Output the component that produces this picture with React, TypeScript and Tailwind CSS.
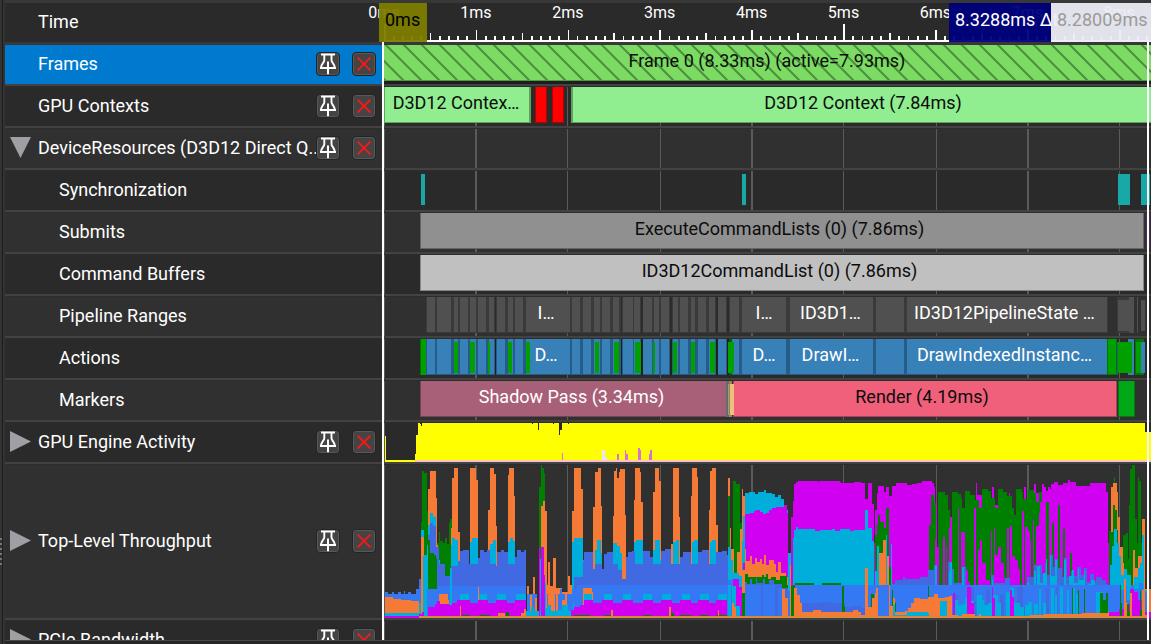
import type { ReactNode } from "react";

/* Horizontal extent of the visible track, in track units. */
const TRACK_START = 384;
const TRACK_WIDTH = 767;

const GRID = [
  { x: 384, w: 1 },
  { x: 475, w: 2 },
  { x: 567, w: 1 },
  { x: 660, w: 1 },
  { x: 751, w: 2 },
  { x: 843, w: 1 },
  { x: 936, w: 1 },
  { x: 1027, w: 2 },
  { x: 1119, w: 1 },
];

const percent = (x: number) => `${((x - TRACK_START) / TRACK_WIDTH) * 100}%`;
const span = (w: number) => `${(w / TRACK_WIDTH) * 100}%`;

/* Turns "x:y x:y ..." into a stepped area that is closed at the floor. */
function stepPath(steps: string, floor: number) {
  const points = steps
    .trim()
    .split(/\s+/)
    .map((p) => p.split(":").map(Number));
  let d = `M${points[0][0]} ${floor}`;
  points.forEach(([x, y], i) => {
    d += `V${y}`;
    if (i < points.length - 1) d += `H${points[i + 1][0]}`;
    else d += `H${x}`;
  });
  return `${d}V${floor}Z`;
}

function Track({ height, children }: { height: number; children?: ReactNode }) {
  return (
    <svg
      className="block w-full"
      height={height}
      viewBox={`${TRACK_START} 0 ${TRACK_WIDTH} ${height}`}
      preserveAspectRatio="none"
      shapeRendering="crispEdges"
      aria-hidden="true"
    >
      {GRID.map((g) => (
        <rect key={g.x} x={g.x} y={0} width={g.w} height={height} fill="#5a5a5a" />
      ))}
      {children}
    </svg>
  );
}

function BarLabel({ from, to, light, children }: { from: number; to: number; light?: boolean; children: string }) {
  return (
    <span
      className={`absolute top-0 flex h-8 items-center justify-center overflow-hidden whitespace-nowrap ${light ? "text-white" : "text-[#0c0c0c]"}`}
      style={{ left: percent(from), width: span(to - from) }}
    >
      {children}
    </span>
  );
}

function Bar({ from, to, fill, edge }: { from: number; to: number; fill: string; edge: string }) {
  return (
    <>
      <rect x={from} y={0} width={to - from} height={36} fill={edge} />
      <rect x={from + 1} y={0} width={to - from - 2} height={35} fill={fill} />
    </>
  );
}

function PinIcon() {
  return (
    <svg className="size-6" viewBox="0 0 24 24" fill="none" stroke="#fff" aria-hidden="true">
      <path d="M5 2.5H19M8.3 3V8.2C8.3 10.5 5.2 11.5 4.9 16M15.5 3V8.2C15.5 10.5 18.6 11.5 18.9 16" strokeWidth="1.9" />
      <path d="M4 16H20M12 9.5V22.3" strokeWidth="2" />
    </svg>
  );
}

function CrossIcon() {
  return (
    <svg className="size-6" viewBox="0 0 24 24" fill="none" stroke="#e81c1c" strokeWidth="2" aria-hidden="true">
      <path d="M5.5 5.5L18.5 18.5M18.5 5.5L5.5 18.5" />
    </svg>
  );
}

function RowButton({ label, children }: { label: string; children: ReactNode }) {
  return (
    <button
      type="button"
      aria-label={label}
      className="relative size-6 rounded border border-[#242424] bg-[#444444] shadow-[inset_0_0_0_1px_#585858]"
    >
      <span className="absolute -inset-px">{children}</span>
    </button>
  );
}

function Expander({ open, name }: { open: boolean; name: string }) {
  return (
    <button type="button" aria-label={`Toggle ${name}`} aria-expanded={open} className="ml-[5px] size-[21px]">
      <svg className="size-[21px]" viewBox="0 0 21 21" fill="#a0a0a4" aria-hidden="true">
        <path d={open ? "M0 0H21L10.5 21Z" : "M0 0L21 10.5L0 21Z"} />
      </svg>
    </button>
  );
}

type RowProps = {
  name: string;
  shade?: "dark" | "light";
  selected?: boolean;
  child?: boolean;
  tools?: boolean;
  expander?: "open" | "closed";
  children?: ReactNode;
};

function Row({ name, shade = "dark", selected, child, tools, expander, children }: RowProps) {
  const bg = shade === "dark" ? "bg-[#2a2a2a]" : "bg-[#303030]";
  return (
    <section className={`mb-px flex shrink-0 border-b-2 border-[#424242] ${bg}`}>
      <div className={`flex w-[377px] shrink-0 items-center pb-0.5 ${selected ? "bg-[#007acf]" : ""}`}>
        <div className="flex w-[33px] shrink-0 items-center">
          {expander && <Expander open={expander === "open"} name={name} />}
        </div>
        <span className={`min-w-0 flex-1 overflow-hidden whitespace-nowrap text-white ${child ? "pl-[21px]" : ""}`}>
          {name}
        </span>
        {tools && (
          <div className="flex gap-3 pr-1.5">
            <RowButton label={`Pin ${name}`}>
              <PinIcon />
            </RowButton>
            <RowButton label={`Remove ${name}`}>
              <CrossIcon />
            </RowButton>
          </div>
        )}
      </div>
      <div className="relative ml-0.5 min-w-0 flex-1">{children}</div>
    </section>
  );
}

const TICKS = Array.from({ length: 84 }, (_, i) => {
  const x = 384.2 + i * 9.19;
  const left = Math.floor(x);
  const height = i % 50 === 0 ? 16 : i % 10 === 0 ? 10 : i % 5 === 0 ? 7 : 4;
  return { left, width: Math.round(x + 1.3) - left, height };
});

function Ruler() {
  return (
    <section className="flex shrink-0 border-y-[3px] border-[#383838] bg-[#2a2a2a]">
      <div className="flex w-[377px] shrink-0 items-center pb-0.5 pl-[33px] text-white">Time</div>
      <div className="relative ml-0.5 h-[39px] min-w-0 flex-1">
        <svg
          className="block w-full"
          height={39}
          viewBox={`${TRACK_START} 0 ${TRACK_WIDTH} 39`}
          preserveAspectRatio="none"
          shapeRendering="crispEdges"
          aria-hidden="true"
        >
          {TICKS.map((t) => (
            <rect key={t.left} x={t.left} y={37 - t.height} width={t.width} height={t.height} fill="#fff" />
          ))}
          <rect x={384} y={37} width={767} height={2} fill="#fff" />
        </svg>
        {[0, 1, 2, 3, 4, 5, 6, 7, 8].map((ms) => (
          <span
            key={ms}
            className="absolute top-0 -ml-6 w-12 text-center text-[16px] leading-[19px] text-white"
            style={{ left: percent(384 + ms * 91.9) }}
          >
            {ms}ms
          </span>
        ))}
        <span className="absolute inset-y-0 -left-[5px] flex w-12 items-center bg-[#7d7d00]/95 pb-1.5 pl-1.5 text-black">
          0ms
        </span>
        <span className="absolute inset-y-0 right-[100px] flex w-[102px] items-center bg-[#00007c]/95 pb-1.5 pl-1.5 whitespace-nowrap text-white">
          8.3288ms Δt
        </span>
        <span className="absolute inset-y-0 right-0 flex w-[100px] items-center bg-[#ececf4]/95 pb-1.5 pl-1.5 text-[#9a9a9a]">
          8.28009ms
        </span>
      </div>
    </section>
  );
}

const RANGES: [number, number][] = [
  [427, 435], [437, 451], [454, 458], [460, 468], [470, 476], [478, 486], [489, 494],
  [497, 505], [508, 513], [515, 523], [526, 570], [572, 580], [583, 591], [594, 600],
  [602, 610], [613, 619], [623, 633], [634, 640], [643, 652], [654, 659], [661, 669],
  [673, 678], [680, 688], [691, 695], [698, 706], [709, 715], [718, 726], [730, 739],
  [742, 786], [790, 873], [876, 904], [907, 1107],
];
const RANGE_BREAKS = [495, 621, 641, 670, 716, 727];
const COPIES: [number, number][] = [
  [454, 458], [470, 475], [488, 490], [508, 512], [526, 530], [595, 599], [614, 619], [635, 641],
  [653, 655], [673, 677], [691, 695], [710, 715], [728, 734],
];

function Ranges({ fill, edge, gap }: { fill: string; edge: string; gap: string }) {
  return (
    <>
      <rect x={426} y={0} width={682} height={36} fill={edge} />
      {RANGE_BREAKS.map((x) => (
        <rect key={x} x={x} y={0} width={x < 640 ? 1 : 2} height={36} fill={gap} />
      ))}
      {RANGES.map(([a, b]) => (
        <rect key={a} x={a} y={0} width={b - a} height={35} fill={fill} />
      ))}
    </>
  );
}

const GREEN = "#008000";
const ORANGE = "#f47a36";
const CYAN = "#00aedb";
const ROYAL = "#4169e1";
const BLUE = "#3478f4";
const MAGENTA = "#d000f0";
const TAN = "#d8883c";

/* Throughput series in paint order, rear first. */
const THROUGHPUT: { fill: string; steps: string }[] = [
  /* shadow pass */
  { fill: GREEN, steps: "421:57 422:6 424:8 427:46 428:140 437:78 439:67 440:76 443:78 445:73 447:79 449:58 450:54 452:66 454:153 539:22 541:0 542:3 544:8 545:82 547:118 548:153" },
  { fill: ORANGE, steps: "428:24 430:6 436:33 437:80 438:153 451:63 452:13 454:3 458:67 460:153 469:108 470:3 476:15 478:153 488:45 490:3 494:9 496:61 497:153 506:88 508:10 509:3 514:31 515:153 527:121 529:153 533:112 535:153 541:41 543:36 545:46 547:120 548:97 550:121 553:93 556:123 561:123 562:127 568:111 570:120 572:46 574:3 581:24 583:153 593:42 595:7 598:3 601:41 602:153 613:51 614:6 616:3 617:13 619:7 620:4 625:50 626:153 634:35 635:3 640:7 641:37 643:153 653:27 655:3 659:16 661:153 671:79 673:3 679:52 680:153 691:31 692:3 697:12 698:153 709:45 710:6 712:3 716:60 718:153 728:13 730:153" },
  { fill: CYAN, steps: "421:65 424:90 427:80 428:60 430:48 433:52 436:95 440:108 445:120 451:80 452:73 455:75 458:96 460:153 470:77 472:73 478:153 488:91 490:79 493:75 496:153 508:77 510:73 513:76 515:153 539:94 541:84 544:118 546:153 572:77 574:73 583:95 584:153 595:85 597:75 601:88 602:153 613:78 617:81 620:88 622:120 626:153 634:77 636:75 643:153 653:85 655:75 660:95 662:153 673:77 676:75 679:153 692:77 694:75 698:153 710:77 712:75 716:153 728:79 731:95 733:153" },
  { fill: ROYAL, steps: "419:114 421:153 428:70 430:58 433:61 436:82 439:99 445:111 450:120 451:101 458:96 460:86 463:85 469:99 478:93 480:85 484:87 487:85 490:99 496:101 497:87 501:85 504:87 508:99 515:92 517:85 521:87 524:85 526:153 574:112 583:96 584:87 593:104 595:99 602:104 604:89 607:87 613:99 618:105 622:114 626:92 628:87 632:86 635:99 643:86 650:92 653:99 661:86 665:84 671:99 680:92 683:87 691:99 698:87 702:85 709:99 716:87 722:86 727:90 728:153" },
  { fill: GREEN, steps: "428:75 430:88 434:90 436:93 437:153" },
  { fill: BLUE, steps: "385:127 388:129 392:127 394:129 398:127 401:129 404:126 405:129 408:127 411:129 416:124 419:120 421:129 427:124 438:121 526:153 527:129 537:153 539:128 545:153 547:129 560:124 562:129 572:124 577:120 728:120 729:153" },
  { fill: ORANGE, steps: "385:132 393:134 401:135 411:136 419:153 421:72 424:138 427:153 439:129 448:135 449:153 478:122 479:153 530:130 532:151 535:133 537:153 548:124 555:153 556:129 558:153 562:135 565:129 567:153 583:123 592:127 593:153" },
  { fill: CYAN, steps: "385:148 419:138 421:153 423:91 427:153 450:103 452:153 460:129 469:153 479:129 487:153 497:129 506:153 516:129 526:146 531:142 534:146 545:143 547:140 551:146 557:145 562:140 568:146 573:138 574:153 584:129 592:153 604:129 612:153 623:129 631:153 643:129 652:153 662:129 671:153 682:129 690:153 700:129 709:153 718:129 727:153" },
  { fill: MAGENTA, steps: "385:151 419:149 422:147 424:151 428:142 435:139 437:136 440:139 449:140 452:138 455:138 457:135 470:138 478:135 488:138 496:135 507:138 515:135 526:151 539:83 540:153 541:82 544:110 545:151 571:145 574:142 580:140 584:135 593:138 602:135 613:138 622:135 633:138 643:135 653:138 661:135 672:138 680:135 691:138 698:135 709:138 716:135 727:151" },
  { fill: GREEN, steps: "462:150 470:151 479:150 490:151 506:147 509:151 574:150 590:151 604:150 612:151 643:150 651:151 670:148 674:151 680:150 691:151 700:150 709:151 716:150 727:151" },
  { fill: ORANGE, steps: "460:141 461:151 498:148 505:151 521:148 524:144 526:151 611:145 613:151 669:142 671:151 718:145 719:151" },

  /* transition */
  { fill: GREEN, steps: "728:31 730:85 733:16 736:19 740:58 742:153" },
  { fill: ORANGE, steps: "730:63 731:84 734:153 737:87 740:64 742:24 743:31 745:153" },
  { fill: CYAN, steps: "728:82 731:95 733:108 739:111 742:76 743:51 745:28 749:27 755:29 758:27 764:25 766:28 772:29 775:32 778:30 781:34 784:40 787:45 788:88 791:153" },
  { fill: BLUE, steps: "728:115 733:128 742:120 746:118 788:126 791:120 794:153" },
  { fill: MAGENTA, steps: "733:114 739:122 742:153 743:98 745:49 750:48 754:46 756:45 760:47 763:49 766:48 769:45 772:43 776:42 780:42 784:40 787:48 788:153" },
  { fill: ORANGE, steps: "742:105 745:84 746:96 750:91 752:99 755:93 757:97 760:94 762:99 764:90 766:100 769:95 774:99 776:107 778:97 781:108 786:112 788:153" },
  { fill: GREEN, steps: "745:109 748:112 762:110 764:112 766:109 768:114 771:112 776:115 780:111 787:120 788:153" },
  { fill: ROYAL, steps: "745:117 747:119 750:114 752:119 756:113 757:118 763:114 765:119 769:115 774:119 782:123 788:153" },
  { fill: BLUE, steps: "745:120 761:153 763:120 775:153 778:123 782:153" },
  { fill: ORANGE, steps: "782:124 785:133 788:153 790:100 793:120 795:153" },
  { fill: CYAN, steps: "728:120 731:153 732:121 736:141 740:153" },
  { fill: ORANGE, steps: "732:138 734:153 734:142 736:153" },
  { fill: GREEN, steps: "742:128 745:153" },

  /* render pass */
  { fill: MAGENTA, steps: "791:52 793:36 794:19 796:17 798:16 818:17 819:16 840:17 841:18 854:17 861:18 865:34 868:18 872:39 874:78 875:45 877:28 878:21 884:27 886:22 889:31 892:21 896:18 907:20 912:19 917:18 922:16 932:18 934:22 935:38 937:82 940:153 976:18 977:30 991:153 992:22 994:40 1009:28 1010:153 1024:22 1026:153 1034:19 1036:28 1042:19 1044:22 1046:26 1048:22 1050:24 1051:19 1054:17 1058:20 1063:18 1068:15 1070:17 1076:21 1090:18 1106:27 1108:78 1109:153" },
  { fill: CYAN, steps: "793:73 794:65 796:62 798:64 815:66 820:65 832:64 835:66 840:64 850:66 854:65 865:45 868:63 872:76 874:153" },
  { fill: GREEN, steps: "793:120 795:118 814:120 822:118 841:120 875:70 877:60 878:50 880:57 884:63 886:43 889:102 892:120 929:60 931:30 934:38 936:153 938:27 945:30 948:45 950:63 952:27 958:29 961:33 962:43 965:26 970:30 975:35 979:43 982:24 988:26 991:33 995:43 998:24 1003:27 1007:31 1012:43 1014:50 1016:24 1022:27 1023:34 1028:25 1034:28 1036:37 1039:27 1042:37 1043:153 1046:37 1049:153 1052:58 1054:153 1058:40 1060:153 1063:64 1065:153 1070:88 1072:105 1074:153" },
  { fill: ORANGE, steps: "879:88 883:75 886:91 889:153" },
  { fill: CYAN, steps: "875:106 877:81 879:153 886:70 887:130 891:79 892:153" },
  { fill: MAGENTA, steps: "892:116 894:153 935:75 937:82 939:153 943:72 945:153 946:82 947:153 949:63 950:52 952:153 958:43 959:153 961:67 965:105 968:117 970:153 974:43 976:153 978:85 980:75 982:98 986:115 990:153 991:66 992:153 994:63 995:90 998:82 1001:98 1004:113 1006:153 1007:63 1009:153 1010:61 1012:91 1015:95 1018:104 1020:153 1022:46 1024:153 1025:62 1028:66 1030:76 1031:117 1033:55 1034:153 1036:61 1039:48 1040:37 1043:87 1046:153" },
  { fill: ROYAL, steps: "892:119 895:115 903:112 905:114 920:112 928:105 934:100 937:120 948:97 950:104 954:118 963:102 966:121 991:110 994:118 1005:113 1010:121 1027:112 1034:100 1037:116 1039:100 1042:109 1045:98 1047:110 1050:90 1053:102 1055:94 1058:103 1062:112 1064:93 1067:112 1071:106 1074:111 1077:102 1081:110 1084:103 1087:117 1090:109 1094:117 1096:112 1102:115 1106:119 1108:153" },
  { fill: CYAN, steps: "935:101 937:153 949:107 950:97 952:153 962:102 964:153 992:115 993:153 1027:117 1029:153 1034:106 1036:153 1037:101 1040:118 1043:108 1046:94 1047:153 1050:90 1051:111 1055:95 1057:153 1064:95 1066:153 1069:111 1072:105 1074:118 1078:104 1079:115 1084:106 1085:120 1088:119 1091:115 1095:121 1096:153" },
  { fill: BLUE, steps: "795:120 892:120 1121:125 1124:153" },
  { fill: ROYAL, steps: "797:130 799:138 821:137 831:138 845:142 853:141 862:143 872:153 936:130 938:153 955:130 958:153 971:123 974:136 976:153 986:125 990:153 1000:130 1004:153 1017:122 1023:141 1027:153 1046:124 1049:153 1056:122 1058:153" },
  { fill: CYAN, steps: "940:135 948:153 953:135 958:140 962:139 965:133 970:136 974:153 977:130 982:135 984:140 988:138 993:130 998:138 1001:153 1006:127 1010:123 1014:138 1020:142 1024:153 1025:140 1028:137 1032:153 1034:139 1038:153 1039:124 1041:153 1043:138 1046:153 1051:123 1054:153 1055:130 1057:153 1060:122 1063:153 1067:125 1069:153 1072:123 1075:153 1076:129 1078:153 1096:127 1103:138 1106:145 1109:153" },
  { fill: GREEN, steps: "791:121 794:153 842:121 844:141 845:153 865:126 868:153 871:129 874:153 892:125 893:138 896:153 928:121 929:153 1072:123 1073:153 1078:125 1079:153 1084:124 1085:153 1100:128 1103:135 1106:128 1108:153" },
  { fill: MAGENTA, steps: "953:128 955:153 967:122 971:138 974:153 992:122 993:133 995:153 1010:125 1012:132 1014:153" },
  { fill: ORANGE, steps: "794:123 797:130 800:138 802:147 813:145 821:147 841:147 853:145 858:147 861:150 868:142 872:133 875:128 878:153 889:120 890:141 893:133 895:147 905:146 908:143 911:138 914:133 920:134 928:132 934:129 938:133 945:132 949:131 952:150 958:151 962:149 975:151 979:149 981:151 1030:150 1044:149 1082:148 1108:147 1109:153" },
  { fill: CYAN, steps: "893:140 895:150 907:147 928:148 929:153 940:136 947:153" },
  { fill: ORANGE, steps: "865:103 868:153 876:123 878:153" },

  /* frame tail */
  { fill: GREEN, steps: "1109:66 1112:30 1114:12 1115:45 1118:153 1123:70 1126:68 1128:94 1129:40 1130:4 1132:0 1135:54 1137:78 1138:12 1139:16 1141:78 1144:153" },
  { fill: ORANGE, steps: "1109:78 1111:22 1113:18 1117:27 1118:52 1120:82 1123:98 1124:153 1133:85 1135:103 1138:91 1142:54 1145:124 1151:153" },
  { fill: GREEN, steps: "1109:78 1110:67 1113:40 1115:45 1117:65 1118:153" },
  { fill: CYAN, steps: "1110:100 1112:81 1114:64 1117:78 1119:91 1121:110 1124:104 1127:110 1131:120 1134:112 1138:103 1140:98 1142:70 1144:125 1148:153" },
  { fill: BLUE, steps: "1109:120 1121:125 1125:120 1127:135 1131:120 1134:124 1139:118 1143:133 1145:127 1149:153" },
  { fill: MAGENTA, steps: "1109:147 1119:144 1124:139 1130:124 1134:127 1138:135 1142:147 1151:153" },
  { fill: ORANGE, steps: "1124:114 1126:138 1128:153 1130:128 1132:153" },
  { fill: GREEN, steps: "1120:120 1121:138 1122:153 1127:139 1129:147 1130:153 1140:126 1141:145 1142:153" },
  { fill: ORANGE, steps: "1142:125 1145:150 1148:153" },
  { fill: TAN, steps: "419:151 1145:153" },
];

const ENGINE_SPIKES = [
  { x: 562, y: 30, w: 1, fill: "#da70d6" },
  { x: 602, y: 27, w: 3, fill: "#e6e6fa" },
  { x: 605, y: 34, w: 2, fill: "#e6e6fa" },
  { x: 617, y: 31, w: 2, fill: "#da70d6" },
  { x: 625, y: 27, w: 1, fill: "#da70d6" },
  { x: 626, y: 31, w: 2, fill: "#da70d6" },
  { x: 638, y: 25, w: 2, fill: "#da70d6" },
  { x: 640, y: 27, w: 1, fill: "#da70d6" },
  { x: 649, y: 31, w: 1, fill: "#da70d6" },
  { x: 650, y: 27, w: 2, fill: "#da70d6" },
];

export default function App() {
  return (
    <main className="flex h-screen overflow-hidden bg-[#2d2d2d] font-['Roboto',sans-serif] text-[18px] leading-6">
      <div className="flex w-[3px] shrink-0 items-center border-r border-[#1c1c1c] bg-[#333333]">
        <div className="mt-[460px] h-7 w-0.5 bg-[repeating-linear-gradient(#777777_0_2px,#333333_2px_5px)]" />
      </div>
      <div className="flex min-w-0 flex-1 flex-col border-l-2 border-[#333333]">
        <div className="relative flex min-h-0 flex-1 flex-col overflow-hidden">
          <Ruler />

          <Row name="Frames" selected tools>
            <Track height={39}>
              <defs>
                <pattern id="stripes" width="18" height="18" patternUnits="userSpaceOnUse" x="386">
                  <path d="M-2 -2L20 20M-2 16L2 20M16 -2L20 2" stroke="#4c8f3e" strokeWidth="2" shapeRendering="auto" />
                </pattern>
              </defs>
              <rect x={384} y={0} width={767} height={39} fill="#1e1e1e" />
              <rect x={384} y={0} width={767} height={36} fill="#7bdb62" />
              <rect x={384} y={0} width={767} height={36} fill="url(#stripes)" />
              <rect x={384} y={35} width={767} height={1} fill="#52984a" />
            </Track>
            <BarLabel from={385} to={1149}>Frame 0 (8.33ms) (active=7.93ms)</BarLabel>
          </Row>

          <Row name="GPU Contexts" tools>
            <Track height={39}>
              <rect x={384} y={0} width={147} height={36} fill="#5fa35f" />
              <rect x={385} y={0} width={144} height={35} fill="#90ee90" />
              <Bar from={535} to={547} fill="#ff0000" edge="#b40000" />
              <Bar from={552} to={564} fill="#ff0000" edge="#b40000" />
              <rect x={571} y={0} width={580} height={36} fill="#5fa35f" />
              <rect x={573} y={0} width={578} height={35} fill="#90ee90" />
            </Track>
            <BarLabel from={382} to={530}>D3D12 Contex…</BarLabel>
            <BarLabel from={575} to={1151}>D3D12 Context (7.84ms)</BarLabel>
          </Row>

          <Row name="DeviceResources (D3D12 Direct Q..." shade="light" tools expander="open">
            <Track height={39} />
          </Row>

          <Row name="Synchronization" child>
            <Track height={39}>
              <rect x={421} y={3} width={4} height={31} fill="#18a8a8" />
              <rect x={742} y={3} width={4} height={31} fill="#18a8a8" />
              <rect x={1118} y={3} width={12} height={31} fill="#18a8a8" />
              <rect x={1141} y={3} width={9} height={31} fill="#18a8a8" />
            </Track>
          </Row>

          <Row name="Submits" shade="light" child>
            <Track height={39}>
              <Bar from={420} to={1144} fill="#909090" edge="#646464" />
              <rect x={1146} y={0} width={4} height={36} fill="#4c2c5e" />
            </Track>
            <BarLabel from={417} to={1142}>ExecuteCommandLists (0) (7.86ms)</BarLabel>
          </Row>

          <Row name="Command Buffers" child>
            <Track height={39}>
              <Bar from={420} to={1144} fill="#c0c0c0" edge="#868686" />
            </Track>
            <BarLabel from={417} to={1142}>ID3D12CommandList (0) (7.86ms)</BarLabel>
          </Row>

          <Row name="Pipeline Ranges" shade="light" child>
            <Track height={39}>
              <Ranges fill="#505050" edge="#3a3a3a" gap="#2c2c2c" />
              <rect x={1117} y={0} width={17} height={36} fill="#3a3a3a" />
              <rect x={1118} y={3} width={11} height={31} fill="#505050" />
              <rect x={1129} y={0} width={5} height={36} fill="#505050" />
              <rect x={1137} y={0} width={1} height={36} fill="#505050" />
              <rect x={1141} y={3} width={4} height={31} fill="#505050" />
            </Track>
            <BarLabel from={524} to={568} light>I…</BarLabel>
            <BarLabel from={742} to={786} light>I…</BarLabel>
            <BarLabel from={788} to={873} light>ID3D1…</BarLabel>
            <BarLabel from={904} to={1105} light>ID3D12PipelineState …</BarLabel>
          </Row>

          <Row name="Actions" child>
            <Track height={39}>
              <Ranges fill="#3880b8" edge="#265c88" gap="#202020" />
              <rect x={420} y={0} width={6} height={36} fill="#00a000" />
              <rect x={420} y={0} width={1} height={36} fill="#007000" />
              <rect x={729} y={0} width={3} height={36} fill="#006400" />
              {COPIES.map(([a, b]) => (
                <rect key={a} x={a} y={3} width={b - a} height={31} fill="#00a000" />
              ))}
              <rect x={1107} y={0} width={10} height={36} fill="#007800" />
              <rect x={1108} y={0} width={8} height={35} fill="#00a000" />
              <rect x={1117} y={3} width={1} height={33} fill="#265c88" />
              <rect x={1128} y={0} width={6} height={36} fill="#3880b8" />
              <rect x={1118} y={3} width={14} height={31} fill="#00a000" />
              <rect x={1135} y={0} width={9} height={36} fill="#007800" />
              <rect x={1136} y={3} width={5} height={31} fill="#00a000" />
              <rect x={1141} y={3} width={4} height={31} fill="#3880b8" />
            </Track>
            <BarLabel from={524} to={568} light>D…</BarLabel>
            <BarLabel from={742} to={786} light>D…</BarLabel>
            <BarLabel from={788} to={873} light>DrawI…</BarLabel>
            <BarLabel from={904} to={1105} light>DrawIndexedInstanc…</BarLabel>
          </Row>

          <Row name="Markers" shade="light" child>
            <Track height={39}>
              <Bar from={420} to={727} fill="#a86078" edge="#754354" />
              <Bar from={733} to={1117} fill="#f0607a" edge="#a84456" />
              <rect x={726} y={0} width={3} height={36} fill="#607068" />
              <rect x={728} y={3} width={2} height={31} fill="#9a9a98" />
              <rect x={729} y={0} width={3} height={36} fill="#a08050" />
              <rect x={730} y={3} width={4} height={31} fill="#f0c078" />
              <Bar from={1118} to={1135} fill="#00a818" edge="#007a10" />
            </Track>
            <BarLabel from={419} to={724} light>Shadow Pass (3.34ms)</BarLabel>
            <BarLabel from={731} to={1113}>Render (4.19ms)</BarLabel>
          </Row>

          <Row name="GPU Engine Activity" tools expander="closed">
            <Track height={39}>
              <path
                d={stepPath(
                  "385:13 386:37 415:31 416:12 418:0 420:1 421:3 422:0 532:1 533:0 538:7 539:0 553:1 554:0 559:12 560:7 562:0 568:1 569:0 1145:9 1151:9",
                  39,
                )}
                fill="#ffff00"
              />
              <rect x={415} y={37} width={736} height={2} fill="#ffc0cb" />
              {ENGINE_SPIKES.map((s) => (
                <rect key={s.x} x={s.x} y={s.y} width={s.w} height={37 - s.y} fill={s.fill} />
              ))}
            </Track>
          </Row>

          <Row name="Top-Level Throughput" shade="light" tools expander="closed">
            <Track height={153}>
              {THROUGHPUT.map((s, i) => (
                <path key={i} d={stepPath(s.steps, 153)} fill={s.fill} />
              ))}
            </Track>
          </Row>

          <Row name="PCIe Bandwidth" tools expander="closed">
            <Track height={39} />
          </Row>

          <div className="absolute top-[42px] bottom-0 left-[377px] w-0.5 bg-white" />
          <div className="absolute top-[42px] right-0.5 bottom-0 w-0.5 bg-white" />
        </div>
        <div className="h-1 shrink-0 border-t border-[#484848] bg-[#262626]" />
      </div>
    </main>
  );
}
